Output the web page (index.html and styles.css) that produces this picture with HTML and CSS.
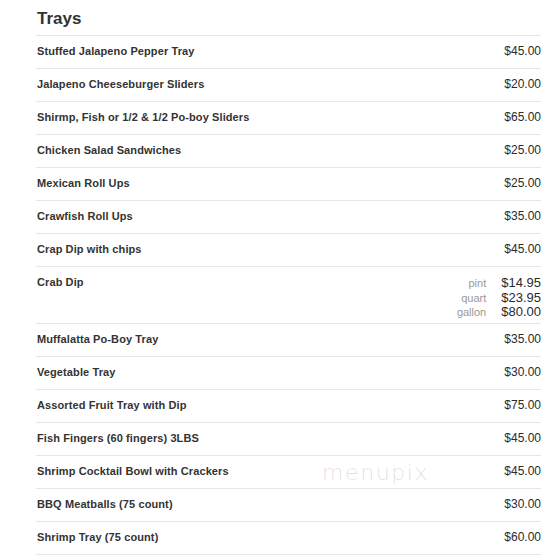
FILE: index.html
```html
<!DOCTYPE html>
<html>
<head>
<meta charset="utf-8">
<link rel="stylesheet" href="styles.css">
</head>
<body>
<div class="menu">
  <h2 class="title">Trays</h2>
  <div class="row"><span class="name">Stuffed Jalapeno Pepper Tray</span><span class="price">$45.00</span></div>
  <div class="row"><span class="name">Jalapeno Cheeseburger Sliders</span><span class="price">$20.00</span></div>
  <div class="row"><span class="name">Shirmp, Fish or 1/2 &amp; 1/2 Po-boy Sliders</span><span class="price">$65.00</span></div>
  <div class="row"><span class="name">Chicken Salad Sandwiches</span><span class="price">$25.00</span></div>
  <div class="row"><span class="name">Mexican Roll Ups</span><span class="price">$25.00</span></div>
  <div class="row"><span class="name">Crawfish Roll Ups</span><span class="price">$35.00</span></div>
  <div class="row"><span class="name">Crap Dip with chips</span><span class="price">$45.00</span></div>
  <div class="row multi"><span class="name">Crab Dip</span>
    <div class="sizes">
      <span class="size">pint</span><span class="price">$14.95</span>
      <span class="size">quart</span><span class="price">$23.95</span>
      <span class="size">gallon</span><span class="price">$80.00</span>
    </div>
  </div>
  <div class="row"><span class="name">Muffalatta Po-Boy Tray</span><span class="price">$35.00</span></div>
  <div class="row"><span class="name">Vegetable Tray</span><span class="price">$30.00</span></div>
  <div class="row"><span class="name">Assorted Fruit Tray with Dip</span><span class="price">$75.00</span></div>
  <div class="row"><span class="name">Fish Fingers (60 fingers) 3LBS</span><span class="price">$45.00</span></div>
  <div class="row"><span class="name">Shrimp Cocktail Bowl with Crackers</span><span class="price">$45.00</span></div>
  <div class="row"><span class="name">BBQ Meatballs (75 count)</span><span class="price">$30.00</span></div>
  <div class="row"><span class="name">Shrimp Tray (75 count)</span><span class="price">$60.00</span></div>
  <div class="row end"></div>
  <div class="watermark">menupix</div>
</div>
</body>
</html>
```
FILE: styles.css
```css
html, body {
  margin: 0;
  padding: 0;
  background: #fff;
}
body {
  font-family: "Liberation Sans", Arial, sans-serif;
  color: #333;
}
.menu {
  position: relative;
  margin-left: 36px;
  width: 505px;
}
.title {
  margin: 0;
  padding: 9px 0 6px 1px;
  font-size: 17px;
  line-height: 20px;
  font-weight: bold;
  color: #333;
}
.row {
  display: flex;
  justify-content: space-between;
  align-items: flex-start;
  border-top: 1px solid #e6e6e6;
  padding: 9px 0 10px 1px;
  line-height: 13px;
}
.row.end {
  padding: 0;
}
.name {
  font-size: 11px;
  font-weight: bold;
  letter-spacing: 0.1px;
  color: #333;
}
.price {
  font-size: 12px;
  color: #2b2b2b;
}
.multi {
  padding-bottom: 3.5px;
}
.sizes {
  display: grid;
  grid-template-columns: auto auto;
  column-gap: 15px;
  justify-items: end;
  align-items: baseline;
  line-height: 14.5px;
}
.sizes > span {
  line-height: 14.5px;
}
.size {
  font-size: 11px;
  color: #999;
}
.multi .price {
  font-size: 13px;
}
.watermark {
  position: absolute;
  left: 286px;
  top: 460px;
  font-family: "DejaVu Sans", sans-serif;
  font-weight: 200;
  font-size: 22px;
  letter-spacing: 1.6px;
  color: rgba(0,0,0,0.14);
  pointer-events: none;
}
```
